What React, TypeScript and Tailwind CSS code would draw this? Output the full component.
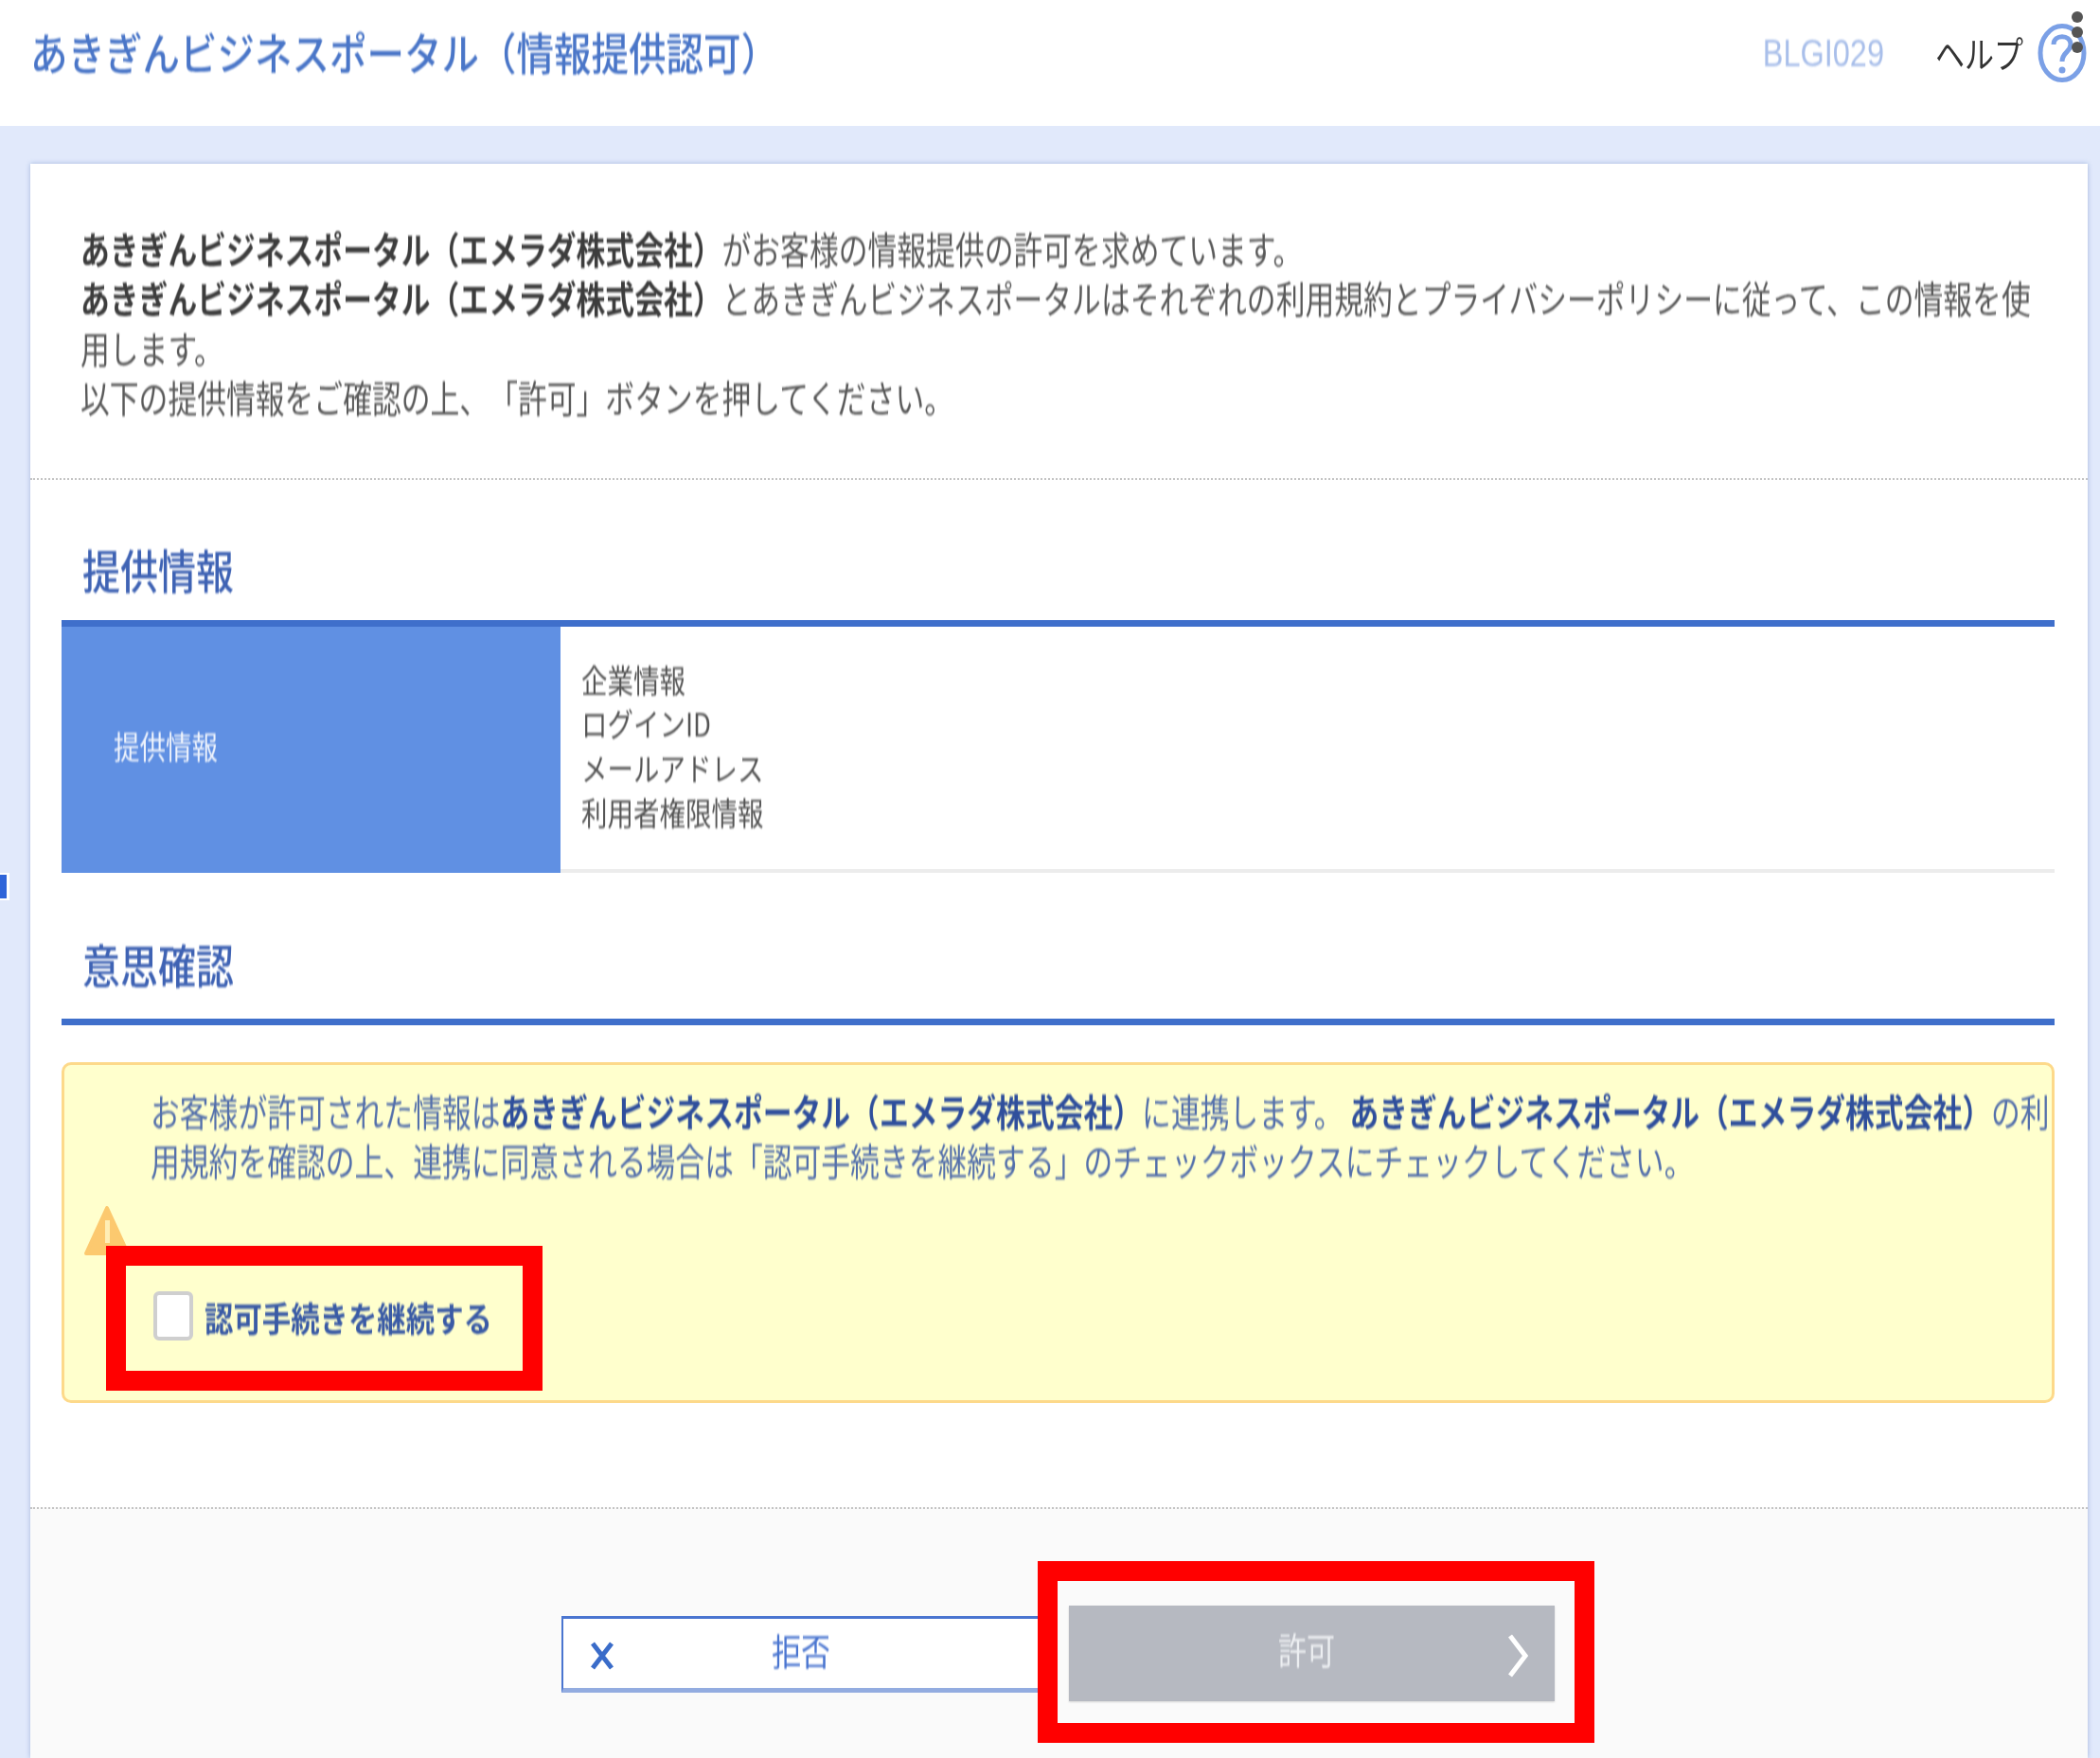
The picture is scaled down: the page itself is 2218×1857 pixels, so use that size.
import React from "react";

const FONT = "font-['Noto_Sans_CJK_JP','Noto_Sans_CJK_SC',sans-serif] [text-spacing-trim:space-all]";
const B = "あきぎんビジネスポータル（エメラダ株式会社）";

function Line({ children, cls = "" }: { children: React.ReactNode; cls?: string }) {
  return (
    <div className={"whitespace-nowrap text-[30.8px] leading-[52.4px] " + cls}>
      <span className="inline-block scale-y-[1.28] blur-[0.7px]">{children}</span>
    </div>
  );
}

function Heading({ children }: { children: React.ReactNode }) {
  return <span className="inline-block scale-y-[1.22] blur-[0.7px] text-[40px] leading-[50px] font-medium text-[#3f63b4]">{children}</span>;
}

function ValueLine({ children }: { children: React.ReactNode }) {
  return (
    <div className="text-[27.5px] leading-[46.7px] text-[#555] whitespace-nowrap">
      <span className="inline-block scale-y-[1.22] blur-[0.7px]">{children}</span>
    </div>
  );
}

export default function App() {
  return (
    <div className={"relative w-[2218px] h-[1857px] overflow-hidden bg-[#e1e9fb] " + FONT}>
      <div className="flex flex-col h-full">
        <header className="h-[133px] shrink-0 bg-white flex items-center pl-[32px] pr-[14px]">
          <h1 className="text-[39.5px] leading-[40px] font-medium text-[#4a76c8] whitespace-nowrap -mt-[26px]">
            <span className="inline-block scale-y-[1.18] blur-[0.7px]">あきぎんビジネスポータル（情報提供認可）</span>
          </h1>
          <div className="ml-auto flex items-center -mt-[22px]">
            <span className="font-['Liberation_Sans',sans-serif] text-[32.5px] leading-[40px] text-[#a9bfea] inline-block scale-y-[1.25] blur-[0.7px]">BLGI029</span>
            <span className="ml-[54px] text-[31px] leading-[40px] text-[#333] inline-block scale-y-[1.25] blur-[0.6px]">ヘルプ</span>
            <svg className="ml-[15px] blur-[0.6px]" width="52" height="64" viewBox="0 0 52 64">
              <ellipse cx="26" cy="32" rx="23" ry="28.5" fill="white" stroke="#7ba0e6" strokeWidth="5" />
              <path d="M17 23 C17 12 35 12 35 23 C35 31 26 31 26 41" fill="none" stroke="#7ba0e6" strokeWidth="5" />
              <circle cx="26" cy="50" r="3.5" fill="#7ba0e6" />
            </svg>
          </div>
        </header>

        <main className="flex-1 min-h-0 pt-[40px] pl-[32px] pr-[13px]">
          <div className="h-full flex flex-col bg-white shadow-[0_0_5px_rgba(70,110,180,0.4)]">
            <section className="h-[334px] shrink-0 pt-[63px] pl-[53px] border-b-2 border-dotted border-[#c4c4c4] text-[#5a5a5a]">
              <Line><b className="font-bold text-[#3d3d3d]">{B}</b>がお客様の情報提供の許可を求めています。</Line>
              <Line><b className="font-bold text-[#3d3d3d]">{B}</b>とあきぎんビジネスポータルはそれぞれの利用規約とプライバシーポリシーに従って、この情報を使</Line>
              <Line>用します。</Line>
              <Line>以下の提供情報をご確認の上、「許可」ボタンを押してください。</Line>
            </section>

            <section className="pl-[33px] pr-[35px]">
              <div className="h-[148px] flex items-end pb-[29px] pl-[22px]">
                <Heading>提供情報</Heading>
              </div>
              <div className="h-[267px] flex border-t-[7px] border-[#3f6fcb]">
                <div className="w-[527px] shrink-0 bg-[#6090e3] flex items-center pl-[55px] pb-[8px] text-[27.5px] text-[#eef3fc]">
                  <span className="inline-block scale-y-[1.22] blur-[0.7px]">提供情報</span>
                </div>
                <div className="flex-1 flex flex-col justify-center pl-[22px] pb-[6px] border-b-4 border-[#ececec]">
                  <ValueLine>企業情報</ValueLine>
                  <ValueLine>ログインID</ValueLine>
                  <ValueLine>メールアドレス</ValueLine>
                  <ValueLine>利用者権限情報</ValueLine>
                </div>
              </div>
              <div className="h-[161px] flex items-end pb-[33px] pl-[22px] border-b-[7px] border-[#3f6fcb]">
                <Heading>意思確認</Heading>
              </div>
              <div className="relative mt-[39px] h-[360px] rounded-[10px] border-[3px] border-[#fdd98a] bg-[#ffffcd] pt-[22px] pl-[91px] text-[#5470ab]">
                <Line>お客様が許可された情報は<b className="font-bold text-[#2f4f9c]">{B}</b>に連携します。 <b className="font-bold text-[#2f4f9c]">{B}</b>の利</Line>
                <Line>用規約を確認の上、連携に同意される場合は「認可手続きを継続する」のチェックボックスにチェックしてください。</Line>
                <div className="mt-[112px] ml-[3px] h-[52px] flex items-center gap-[12px]">
                  <span className="w-[42px] h-[52px] rounded-[6px] border-4 border-[#cfcfcf] bg-white blur-[0.6px]" />
                  <span className="text-[30.4px] leading-[52px] font-bold text-[#3a5ba5] mt-[3px] inline-block scale-y-[1.2] blur-[0.7px]">認可手続きを継続する</span>
                </div>
                <svg className="absolute left-[21px] top-[148px] blur-[0.7px]" width="48" height="54" viewBox="0 0 48 54">
                  <path d="M24 3 L46 51 L2 51 Z" fill="#fcc96f" stroke="#fcc96f" strokeWidth="4" strokeLinejoin="round" />
                  <rect x="22" y="16" width="5" height="24" fill="#ffeeb5" />
                </svg>
              </div>
            </section>

            <footer className="mt-[110px] flex-1 min-h-0 bg-[#fafafa] border-t-2 border-dotted border-[#c4c4c4] pl-[561px] pt-[102px]">
              <div className="flex items-center gap-[29px]">
                <button className="relative mt-[2px] w-[507px] h-[81px] bg-white border-2 border-t-[3px] border-b-[5px] border-[#4a75d0] border-b-[#93ace0] flex items-center text-[#4a75d0]">
                  <svg className="absolute left-[28px] top-[24px] blur-[0.5px]" width="26" height="30" viewBox="0 0 26 30">
                    <path d="M3 2 L23 28 M23 2 L3 28" stroke="#3a6cc9" strokeWidth="5" />
                  </svg>
                  <span className="ml-[220px] text-[31px] inline-block scale-y-[1.25] blur-[0.7px] -mt-[6px]">拒否</span>
                </button>
                <button className="relative w-[513px] h-[101px] bg-[#b6b9c1] text-[#eceef1] flex items-center shadow-[0_1px_2px_rgba(0,0,0,0.15)]">
                  <span className="ml-[221px] text-[30px] inline-block scale-y-[1.3] blur-[0.7px] -mt-[10px]">許可</span>
                  <svg className="absolute left-[463px] top-[30px] blur-[0.5px]" width="22" height="46" viewBox="0 0 22 46">
                    <path d="M3 2 L19 23 L3 44" fill="none" stroke="white" strokeWidth="5" />
                  </svg>
                </button>
              </div>
            </footer>
          </div>
        </main>
      </div>

      <div className="absolute left-[2188px] top-[12px] flex flex-col gap-[4px] blur-[0.6px]">
        <span className="w-[12px] h-[12px] rounded-full bg-[#555]" />
        <span className="w-[12px] h-[12px] rounded-full bg-[#555]" />
        <span className="w-[12px] h-[12px] rounded-full bg-[#555]" />
      </div>
      <div className="absolute left-0 top-[922px] w-[10px] h-[29px] bg-white border-y-2 border-r-2 border-white">
        <div className="w-[7px] h-full bg-[#2f65d9]" />
      </div>
      <div className="absolute left-[112px] top-[1316px] w-[461px] h-[153px] border-[21px] border-[#ff0000]" />
      <div className="absolute left-[1096px] top-[1649px] w-[588px] h-[192px] border-[21px] border-[#ff0000]" />
    </div>
  );
}
